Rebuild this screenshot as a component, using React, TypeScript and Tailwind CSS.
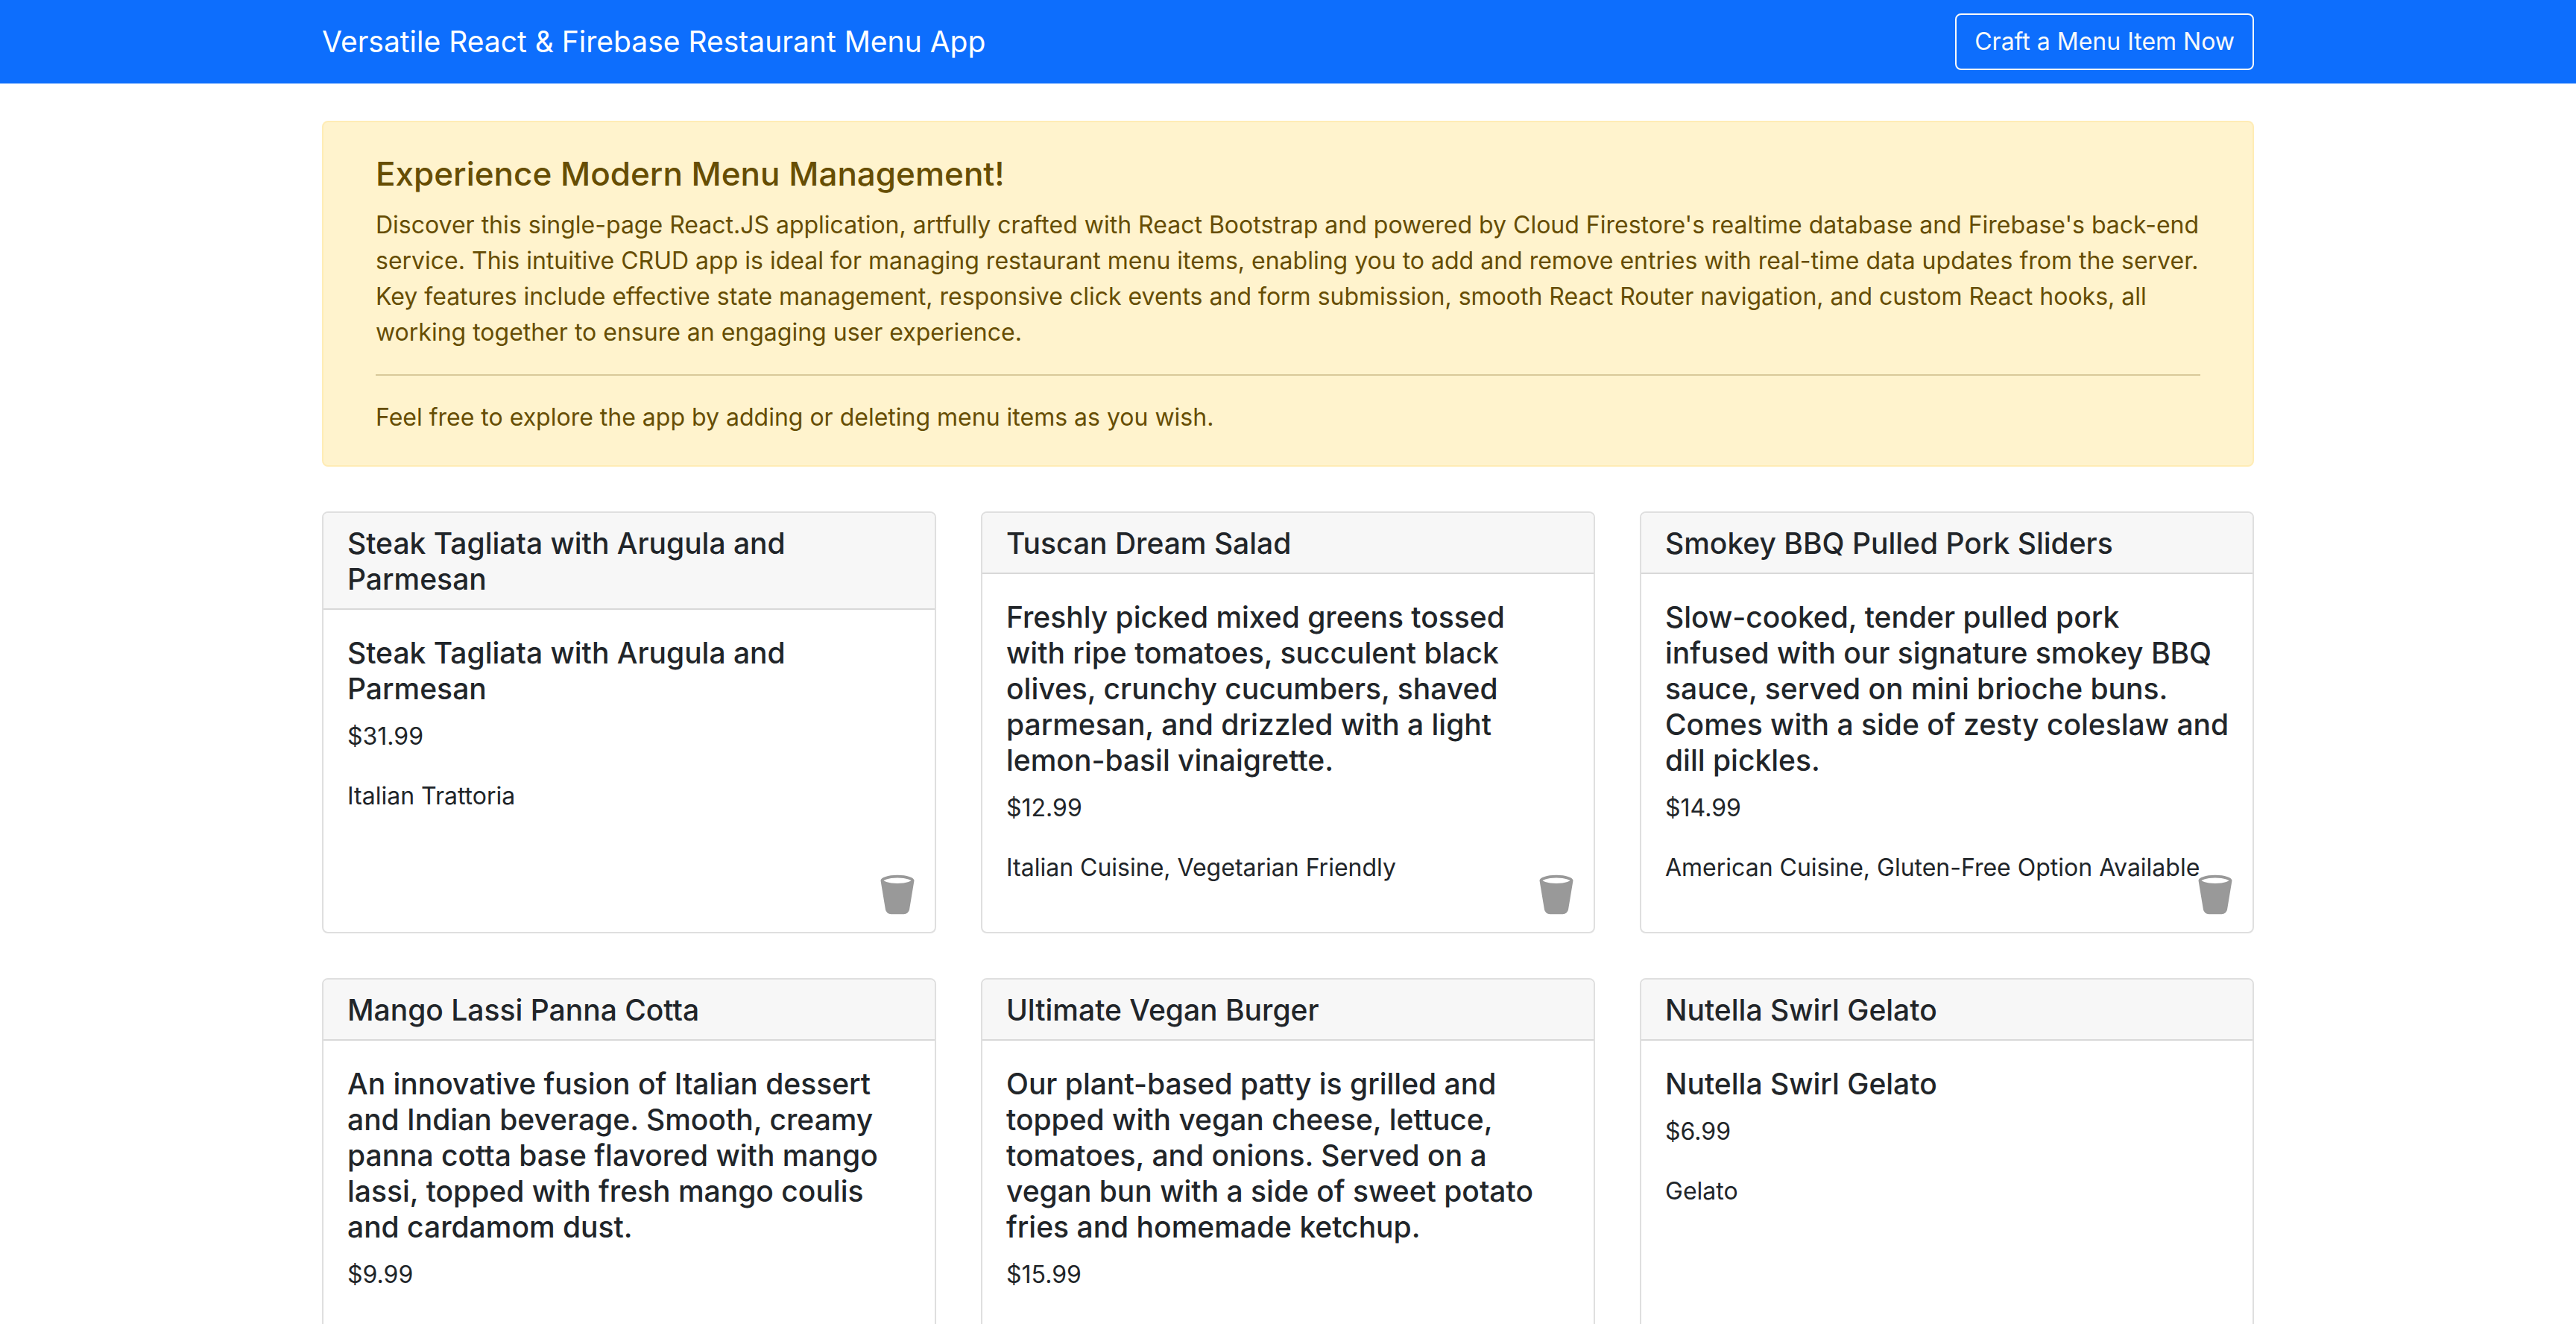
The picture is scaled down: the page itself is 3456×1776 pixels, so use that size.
import { BsTrash2Fill } from "react-icons/bs";

type MenuItem = { name: string; description: string; price: string; category: string };

const menuItems: MenuItem[] = [
  {
    name: "Steak Tagliata with Arugula and Parmesan",
    description: "Steak Tagliata with Arugula and Parmesan",
    price: "$31.99",
    category: "Italian Trattoria",
  },
  {
    name: "Tuscan Dream Salad",
    description:
      "Freshly picked mixed greens tossed\nwith ripe tomatoes, succulent black olives, crunchy cucumbers, shaved parmesan, and drizzled with a light lemon-basil vinaigrette.",
    price: "$12.99",
    category: "Italian Cuisine, Vegetarian Friendly",
  },
  {
    name: "Smokey BBQ Pulled Pork Sliders",
    description:
      "Slow-cooked, tender pulled pork\ninfused with our signature smokey BBQ sauce, served on mini brioche buns.\nComes with a side of zesty coleslaw and dill pickles.",
    price: "$14.99",
    category: "American Cuisine, Gluten-Free Option Available",
  },
  {
    name: "Mango Lassi Panna Cotta",
    description:
      "An innovative fusion of Italian dessert and Indian beverage. Smooth, creamy panna cotta base flavored with mango lassi, topped with fresh mango coulis and cardamom dust.",
    price: "$9.99",
    category: "Fusion Dessert, Vegetarian",
  },
  {
    name: "Ultimate Vegan Burger",
    description:
      "Our plant-based patty is grilled and topped with vegan cheese, lettuce, tomatoes, and onions. Served on a vegan bun with a side of sweet potato fries and homemade ketchup.",
    price: "$15.99",
    category: "Vegan, American Cuisine",
  },
  {
    name: "Nutella Swirl Gelato",
    description: "Nutella Swirl Gelato",
    price: "$6.99",
    category: "Gelato",
  },
];

function Navbar() {
  return (
    <header className="bg-[#0d6efd] py-[18px] text-white">
      <div className="mx-auto flex max-w-[2640px] items-center justify-between px-6">
        <a href="#" className="text-[39px] leading-[60px]">
          Versatile React &amp; Firebase Restaurant Menu App
        </a>
        <button
          type="button"
          className="rounded-lg border-2 border-[#f8f9fa] px-6 py-3 text-[32px] leading-[48px] text-[#f8f9fa]"
        >
          Craft a Menu Item Now
        </button>
      </div>
    </header>
  );
}

function Intro() {
  return (
    <section className="rounded-lg border-2 border-[#ffecb5] bg-[#fff3cd] px-[70px] py-10 text-[#664d03]">
      <h1 className="mb-4 text-[44px] leading-[58px] font-medium">Experience Modern Menu Management!</h1>
      <p>
        Discover this single-page React.JS application, artfully crafted with React Bootstrap and powered by Cloud
        Firestore's realtime database and Firebase's back-end service. This intuitive CRUD app is ideal for managing
        restaurant menu items, enabling you to add and remove entries with real-time data updates from the server. Key
        features include effective state management, responsive click events and form submission, smooth React Router
        navigation, and custom React hooks, all working together to ensure an engaging user experience.
      </p>
      <hr className="my-8 border-t-2 border-current opacity-25" />
      <p>Feel free to explore the app by adding or deleting menu items as you wish.</p>
    </section>
  );
}

function MenuCard({ item }: { item: MenuItem }) {
  return (
    <article className="relative rounded-lg border-2 border-[#dfdfdf] bg-white">
      <h2 className="rounded-t-md border-b-2 border-[#d8d8d8] bg-[#f7f7f7] px-8 pt-[17px] pb-[15px] text-[39px] leading-[48px] font-medium">
        {item.name}
      </h2>
      <div className="pt-[34px] pr-7 pb-[30px] pl-8">
        <h3 className="mb-4 text-[39px] leading-[48px] font-medium whitespace-pre-line">{item.description}</h3>
        <p className="mb-8">{item.price}</p>
        <p className="mb-8">{item.category}</p>
      </div>
      <button type="button" aria-label={`Delete ${item.name}`} className="absolute right-5 bottom-5 text-[#999999]">
        <BsTrash2Fill className="size-15" />
      </button>
    </article>
  );
}

export default function App() {
  return (
    <div className="min-h-screen bg-white font-['Inter',sans-serif] text-[32px] leading-[48px] text-[#212529]">
      <Navbar />
      <main className="mx-auto flex max-w-[2640px] flex-col gap-15 px-6 pt-[50px] pb-15">
        <Intro />
        <section aria-label="Menu" className="grid grid-cols-3 gap-15">
          {menuItems.map((item) => (
            <MenuCard key={item.name} item={item} />
          ))}
        </section>
      </main>
    </div>
  );
}
